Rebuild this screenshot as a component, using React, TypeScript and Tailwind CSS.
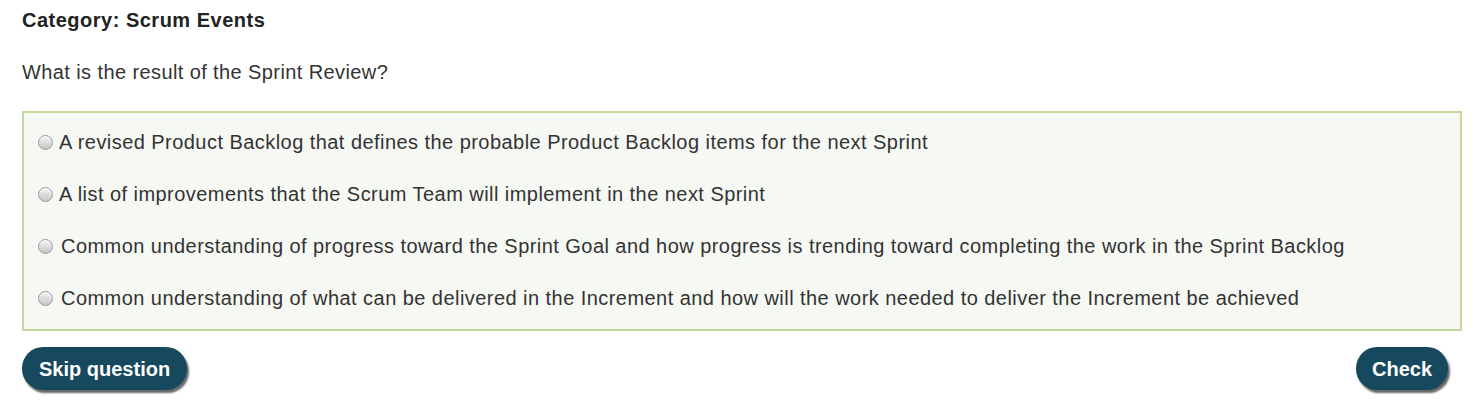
const options = [
  "A revised Product Backlog that defines the probable Product Backlog items for the next Sprint",
  "A list of improvements that the Scrum Team will implement in the next Sprint",
  "Common understanding of progress toward the Sprint Goal and how progress is trending toward completing the work in the Sprint Backlog",
  "Common understanding of what can be delivered in the Increment and how will the work needed to deliver the Increment be achieved",
]

function Radio() {
  return (
    <span className="block w-[15px] h-[15px] min-w-[15px] rounded-full border border-[#9a9a9a] bg-gradient-to-b from-[#f4f4f4] to-[#c6c6c6] shadow-[inset_0_1px_1px_rgba(255,255,255,0.8)]" />
  )
}

export default function App() {
  return (
    <div className="w-full min-h-screen bg-white px-[22px] pt-[8px] text-[#333] font-['Liberation_Sans',Arial,sans-serif]">
      <h2 className="text-[20px] font-bold leading-[24px] tracking-[0.5px] text-[#222]">Category: Scrum Events</h2>
      <p className="mt-[28px] text-[20px] leading-[24px] tracking-[0.4px]">What is the result of the Sprint Review?</p>

      <div className="mt-[27px] w-[1440px] border-2 border-[#c5d89e] bg-[#f6f8f3] pt-[3px] pb-[5px]">
        {options.map((o, i) => (
          <label key={i} className="h-[52px] flex items-center pl-[14px] gap-[6px] text-[20px] tracking-[0.45px] text-[#333]">
            <Radio />
            <span className={i < 2 ? "" : "ml-[2px]"}>{o}</span>
          </label>
        ))}
      </div>

      <div className="mt-[16px] w-[1426px] flex justify-between">
        <button className="h-[43px] px-[17px] rounded-[21px] bg-[#16485e] text-white text-[20px] font-bold shadow-[2px_3px_2px_rgba(0,0,0,0.6)]">
          Skip question
        </button>
        <button className="h-[43px] px-[16px] rounded-[21px] bg-[#16485e] text-white text-[20px] font-bold shadow-[2px_3px_2px_rgba(0,0,0,0.6)]">
          Check
        </button>
      </div>
    </div>
  )
}
